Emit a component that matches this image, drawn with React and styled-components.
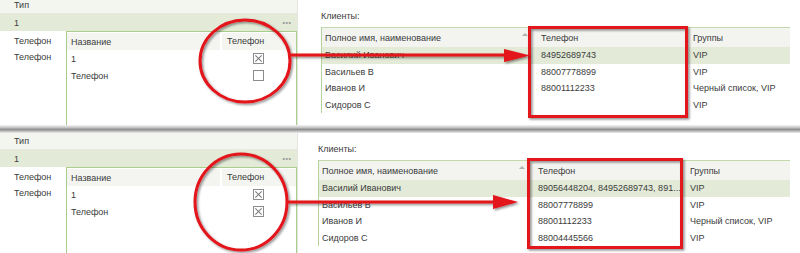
import React from "react";
import styled, { createGlobalStyle } from "styled-components";

const GlobalStyle = createGlobalStyle`
  html, body {
    margin: 0;
    padding: 0;
    background: #fff;
  }
  body {
    font-family: "Liberation Sans", Arial, sans-serif;
    font-size: 9px;
    color: #3b3b3b;
  }
`;

const clients = [
  { name: "Василий Иванович", groups: "VIP" },
  { name: "Васильев В", groups: "VIP" },
  { name: "Иванов И", groups: "Черный список, VIP" },
  { name: "Сидоров С", groups: "VIP" },
];

const screens = [
  {
    cropTop: -3,
    shift: 0,
    checks: [true, false],
    phones: ["84952689743", "88007778899", "88001112233", ""],
  },
  {
    cropTop: 0,
    shift: -3,
    checks: [true, true],
    phones: [
      "89056448204, 84952689743, 891...",
      "88007778899",
      "88001112233",
      "88004445566",
    ],
  },
];

const App = () => {
  return (
    <>
      <GlobalStyle />
      <Page>
        {screens.map((s, i) => (
          <React.Fragment key={i}>
            {i > 0 && <Separator />}
            <Screen $height={i === 0 ? 125 : 120}>
              <LeftPanel $top={s.cropTop}>
                <TypeHeader>Тип</TypeHeader>
                <SelectedRow>
                  <span>1</span>
                  <Dots>···</Dots>
                </SelectedRow>
                <Body>
                  <Labels>
                    <Label>Телефон</Label>
                    <Label>Телефон</Label>
                  </Labels>
                  <InnerTable>
                    <InnerRow $head>
                      <NameCell>Название</NameCell>
                      <CheckHead>Телефон</CheckHead>
                    </InnerRow>
                    {["1", "Телефон"].map((t, j) => (
                      <InnerRow key={t}>
                        <NameCell>{t}</NameCell>
                        <CheckCell>
                          <Checkbox $checked={s.checks[j]} />
                        </CheckCell>
                      </InnerRow>
                    ))}
                  </InnerTable>
                </Body>
              </LeftPanel>

              <RightPanel $shift={s.shift}>
                <Caption>Клиенты:</Caption>
                <ClientTable>
                  <Row $head>
                    <Cell $w={208}>
                      Полное имя, наименование
                      <SortMark />
                    </Cell>
                    <Cell $w={160} $pad={11}>Телефон</Cell>
                    <Cell>Группы</Cell>
                  </Row>
                  {clients.map((c, j) => (
                    <Row key={c.name} $selected={j === 0}>
                      <Cell $w={208}>{c.name}</Cell>
                      <Cell $w={160} $pad={11}>{s.phones[j]}</Cell>
                      <Cell>{c.groups}</Cell>
                    </Row>
                  ))}
                </ClientTable>
              </RightPanel>
            </Screen>
          </React.Fragment>
        ))}

        <Overlay viewBox="0 0 800 253" width="800" height="253">
          <defs>
            <filter id="shadow" x="-20%" y="-20%" width="140%" height="140%">
              <feDropShadow dx="1.5" dy="1.5" stdDeviation="1" floodColor="#000" floodOpacity="0.45" />
            </filter>
          </defs>
          <g fill="none" stroke="#e3121a" strokeWidth="3" filter="url(#shadow)">
            <ellipse cx="245" cy="61" rx="45" ry="41" />
            <line x1="291" y1="55" x2="508" y2="55" />
            <rect x="529.5" y="27.5" width="157" height="89" />
            <ellipse cx="241" cy="202" rx="46" ry="48" />
            <line x1="288" y1="202" x2="497" y2="202" />
            <rect x="528.5" y="159.5" width="153" height="88" />
          </g>
          <g fill="#e3121a" filter="url(#shadow)">
            <polygon points="504,49 530,55.5 504,62" />
            <polygon points="493,195 518,202 493,209" />
          </g>
        </Overlay>
      </Page>
    </>
  );
};

export default App;

const Page = styled.div`
  position: relative;
  width: 800px;
  height: 253px;
  overflow: hidden;
`;

const Screen = styled.div`
  display: flex;
  height: ${(p) => p.$height}px;
  overflow: hidden;
`;

const Separator = styled.div`
  height: 8px;
  background: linear-gradient(
    to bottom,
    #f4f4f4 0%,
    #c9c9c9 30%,
    #8f8f8f 55%,
    #b5b5b5 75%,
    #ededed 100%
  );
`;

const LeftPanel = styled.div`
  width: 297px;
  flex-shrink: 0;
  margin-top: ${(p) => p.$top}px;
  display: flex;
  flex-direction: column;
  border-right: 1px solid #e4e6e0;
`;

const TypeHeader = styled.div`
  height: 17px;
  line-height: 17px;
  padding-left: 14px;
  background: #f3f5ef;
  border-bottom: 1px solid #e7eae2;
  box-sizing: border-box;
`;

const SelectedRow = styled.div`
  display: flex;
  justify-content: space-between;
  align-items: center;
  height: 17px;
  padding: 0 6px 0 14px;
  background: #e3ebd8;
`;

const Dots = styled.span`
  color: #9a9a9a;
  font-size: 12px;
  font-weight: bold;
  letter-spacing: -1px;
`;

const Body = styled.div`
  display: flex;
  flex: 1;
`;

const Labels = styled.div`
  width: 66px;
  padding: 2px 0 0 14px;
  box-sizing: border-box;
`;

const Label = styled.div`
  height: 16px;
  line-height: 16px;
`;

const InnerTable = styled.div`
  flex: 1;
  border: 1px solid #a9cd8a;
  border-bottom: none;
`;

const InnerRow = styled.div`
  display: flex;
  height: 17px;
  align-items: center;
  ${(p) => p.$head && "height: 17px; margin-top: 1px; background: #f4f5f1;"}
`;

const NameCell = styled.div`
  width: 153px;
  padding-left: 4px;
  box-sizing: border-box;
`;

const CheckHead = styled.div`
  flex: 1;
  align-self: stretch;
  line-height: 17px;
  padding-left: 5px;
  border-left: 2px solid #fff;
`;

const CheckCell = styled.div`
  flex: 1;
  display: flex;
  justify-content: center;
`;

const Checkbox = styled.span`
  position: relative;
  width: 9px;
  height: 9px;
  border: 1px solid #8c8c8c;
  background: #fff;

  ${(p) =>
    p.$checked &&
    `
    &::before, &::after {
      content: "";
      position: absolute;
      left: 4px;
      top: 0px;
      width: 1px;
      height: 9px;
      background: #7a7a7a;
    }
    &::before { transform: rotate(45deg); }
    &::after { transform: rotate(-45deg); }
  `}
`;

const RightPanel = styled.div`
  flex: 1;
  padding: 10px 10px 0 ${(p) => 23 + p.$shift}px;
  display: flex;
  flex-direction: column;
`;

const Caption = styled.div`
  line-height: 12px;
  margin-bottom: 5px;
`;

const ClientTable = styled.div`
  border-top: 1px solid #c2d9ab;
  border-left: 1px solid #b5d29a;
`;

const Row = styled.div`
  display: flex;
  height: ${(p) => (p.$head ? 19 : 16.5)}px;
  align-items: center;
  background: ${(p) => (p.$head ? "#f3f3f0" : p.$selected ? "#e3ebd8" : "#fff")};
`;

const Cell = styled.div`
  position: relative;
  ${(p) => (p.$w ? `width: ${p.$w}px;` : "flex: 1;")}
  padding-left: ${(p) => p.$pad || 3}px;
  box-sizing: border-box;
  white-space: nowrap;
  overflow: hidden;
`;

const SortMark = styled.span`
  position: absolute;
  right: 2px;
  top: 0;
  width: 0;
  height: 0;
  border-left: 3px solid transparent;
  border-right: 3px solid transparent;
  border-bottom: 3px solid #b0b0b0;
`;

const Overlay = styled.svg`
  position: absolute;
  left: 0;
  top: 0;
  pointer-events: none;
`;
